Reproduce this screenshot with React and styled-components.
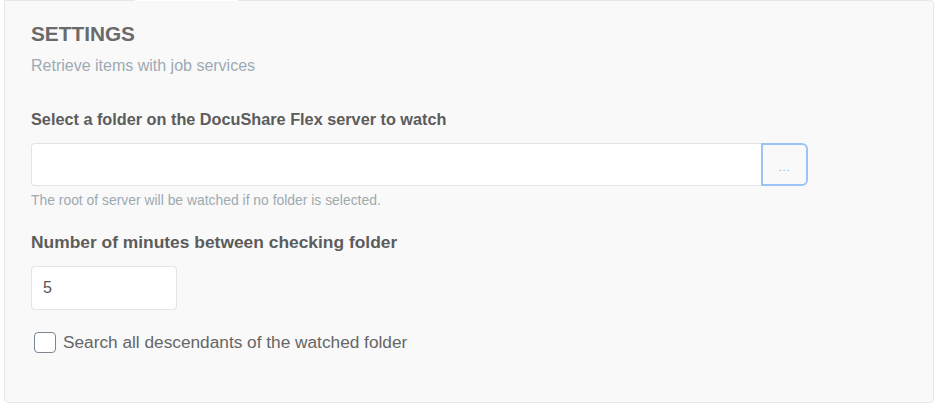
import React from "react";
import styled, { createGlobalStyle } from "styled-components";

const GlobalStyle = createGlobalStyle`
  body {
    margin: 0;
    background: #ffffff;
    font-family: "Liberation Sans", Arial, sans-serif;
  }
`;

export default function App() {
  return (
    <>
      <GlobalStyle />
      <Panel>
        <Title>SETTINGS</Title>
        <Subtitle>Retrieve items with job services</Subtitle>

        <Label $top={33} $size={16.25}>
          Select a folder on the DocuShare Flex server to watch
        </Label>
        <InputGroup>
          <TextInput type="text" />
          <BrowseButton type="button">...</BrowseButton>
        </InputGroup>
        <HelpText>The root of server will be watched if no folder is selected.</HelpText>

        <Label $top={23} $size={17.4}>
          Number of minutes between checking folder
        </Label>
        <SmallInput type="text" defaultValue="5" />

        <CheckRow>
          <CheckBox type="checkbox" />
          Search all descendants of the watched folder
        </CheckRow>
      </Panel>
    </>
  );
}

const Panel = styled.div`
  position: relative;
  box-sizing: border-box;
  margin: 0 2px 0 4px;
  height: 403px;
  padding: 21px 26px 0 26px;
  background: #f9f9f9;
  border: 1px solid #e7e7e7;
  border-radius: 0 4px 4px 4px;

  &::before {
    content: "";
    position: absolute;
    top: -1px;
    left: 130px;
    width: 103px;
    height: 1px;
    background: #ffffff;
  }
`;

const Title = styled.h2`
  margin: 0;
  font-size: 20.8px;
  line-height: 24px;
  font-weight: 700;
  color: #6a6a6a;
`;

const Subtitle = styled.p`
  margin: 10px 0 0;
  font-size: 16px;
  line-height: 20px;
  color: #9daab3;
`;

const Label = styled.label`
  display: block;
  margin-top: ${(p) => p.$top}px;
  font-size: ${(p) => p.$size}px;
  line-height: 20px;
  font-weight: 700;
  color: #5c5c5c;
`;

const InputGroup = styled.div`
  display: flex;
  margin-top: 14px;
  width: 777px;
  height: 43px;
`;

const TextInput = styled.input`
  flex: 1;
  box-sizing: border-box;
  height: 100%;
  margin: 0;
  padding: 0 12px;
  border: 1px solid #e4e4e4;
  border-right: none;
  border-radius: 4px 0 0 4px;
  background: #ffffff;
  font-family: inherit;
  font-size: 16px;
  outline: none;
`;

const BrowseButton = styled.button`
  appearance: none;
  box-sizing: border-box;
  width: 47px;
  height: 100%;
  margin: 0;
  padding: 4px 0 0;
  border: 2px solid #9cc3f5;
  border-radius: 0 6px 6px 0;
  background: #f9f9f9;
  color: #7eaaf0;
  font-family: inherit;
  font-size: 11px;
  letter-spacing: 1px;
  cursor: pointer;
`;

const HelpText = styled.div`
  margin-top: 6px;
  font-size: 13.9px;
  line-height: 17px;
  color: #9daab0;
`;

const SmallInput = styled.input`
  display: block;
  box-sizing: border-box;
  width: 146px;
  height: 44px;
  margin: 14px 0 0;
  padding: 0 11px;
  border: 1px solid #e4e4e4;
  border-radius: 4px;
  background: #ffffff;
  color: #555555;
  font-family: inherit;
  font-size: 16px;
  outline: none;
`;

const CheckRow = styled.label`
  display: flex;
  align-items: center;
  gap: 7px;
  margin-top: 22px;
  padding-left: 3px;
  font-size: 17.25px;
  line-height: 21px;
  color: #666666;
`;

const CheckBox = styled.input`
  appearance: none;
  box-sizing: border-box;
  width: 22px;
  height: 21px;
  margin: 0;
  border: 1px solid #7d8791;
  border-radius: 4px;
  background: #ffffff;
`;
